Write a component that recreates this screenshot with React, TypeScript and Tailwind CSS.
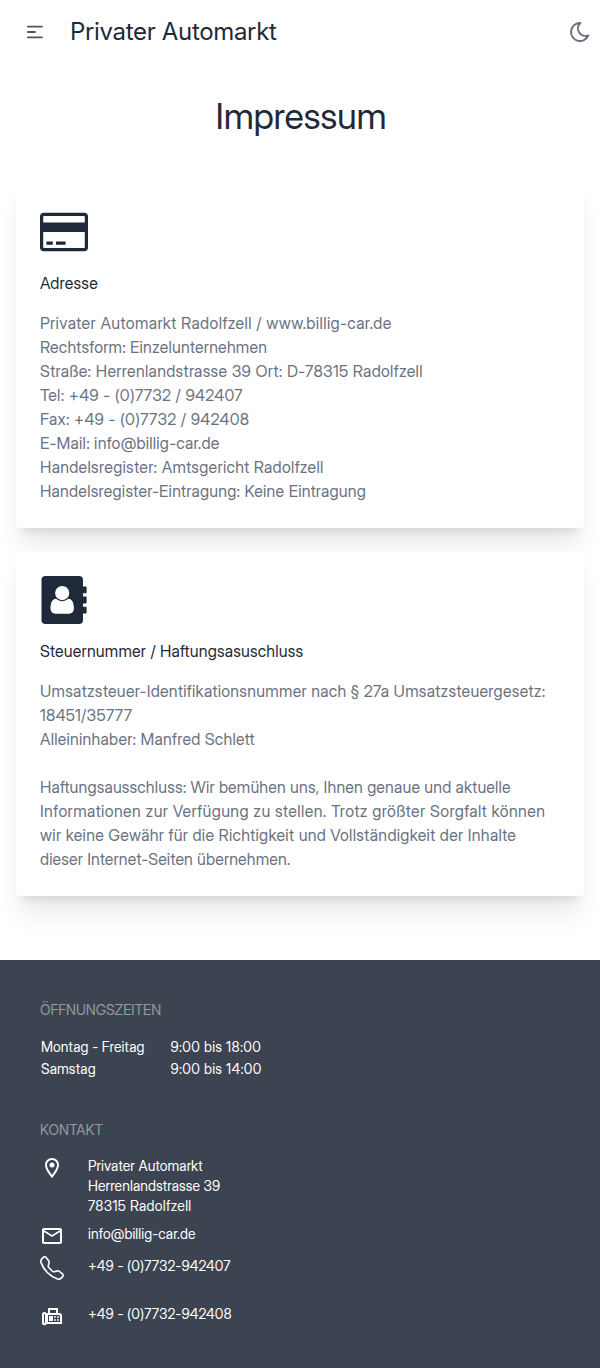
import type { ReactNode } from "react";
import { BsTelephone } from "react-icons/bs";
import { MdOutlineEmail, MdOutlineLocationOn } from "react-icons/md";

function CreditCardIcon() {
  return (
    <svg className="h-12 w-12" viewBox="0 0 48 48" fill="currentColor" aria-hidden="true">
      <path fillRule="evenodd" d="M4 4.8H44a4 4 0 0 1 4 4V39.2a4 4 0 0 1-4 4H4a4 4 0 0 1-4-4V8.8a4 4 0 0 1 4-4ZM4 8a.8.8 0 0 0-.8.8v5.6h41.6V8.8A.8.8 0 0 0 44 8ZM3.2 24v15.2a.8.8 0 0 0 .8.8h40a.8.8 0 0 0 .8-.8V24ZM6.4 33.6h6.4v3.2H6.4ZM16 33.6h9.6v3.2H16Z" />
    </svg>
  );
}

function AddressBookIcon() {
  return (
    <svg className="h-12 w-12" viewBox="0 0 48 48" fill="currentColor" aria-hidden="true">
      <path fillRule="evenodd" d="M5.5 0H39a4 4 0 0 1 4 4v6.4h2.8a.8.8 0 0 1 .8.8v5.2a.8.8 0 0 1-.8.8H43v3.4h2.8a.8.8 0 0 1 .8.8v5.2a.8.8 0 0 1-.8.8H43v3.4h2.8a.8.8 0 0 1 .8.8v5.2a.8.8 0 0 1-.8.8H43V44a4 4 0 0 1-4 4H5.5a4 4 0 0 1-4-4V4a4 4 0 0 1 4-4ZM22.2 10a7.1 7.1 0 1 0 0 14.2 7.1 7.1 0 0 0 0-14.2ZM16.1 22.8c-3.9.2-5.6 4.2-5.6 9.7 0 3.3 1.9 5.2 4.8 5.2h13.8c2.9 0 4.8-1.9 4.8-5.2 0-5.5-1.7-9.5-5.6-9.7-1.9 1.6-3.8 2.4-6.1 2.4s-4.2-.8-6.1-2.4Z" />
    </svg>
  );
}

function FaxIcon() {
  return (
    <svg className="h-6 w-6" viewBox="0 0 24 24" fill="currentColor" aria-hidden="true">
      <path fillRule="evenodd" d="M8 4h10v5h1a3 3 0 0 1 3 3v8H7v-1a2.5 2.5 0 0 1-5-.5v-8A2.5 2.5 0 0 1 4.5 8 2.5 2.5 0 0 1 6.6 9.200H8ZM10 6v3h6V6ZM4.5 10a.5.5 0 0 0-.5.5v8a.5.5 0 0 0 1 0v-8a.5.5 0 0 0-.5-.5ZM8 11v7h12v-6a1 1 0 0 0-1-1Z" />
      <path d="M9 12h4v5H9Z" />
      <path opacity=".65" d="M14 12h2v2h-2ZM17 12h2v2h-2ZM14 15h2v2h-2ZM17 15h2v2h-2Z" />
    </svg>
  );
}

function MoonIcon() {
  return (
    <svg className="h-6 w-6" viewBox="0 0 24 24" fill="none" stroke="currentColor" strokeWidth="2" strokeLinecap="round" strokeLinejoin="round" aria-hidden="true">
      <path d="M12 3h.393a7.5 7.5 0 0 0 7.92 12.446A9 9 0 1 1 12 3Z" />
    </svg>
  );
}

function Card({ icon, title, children }: { icon: ReactNode; title: string; children: ReactNode }) {
  return (
    <section className="rounded bg-white p-6 shadow-xl">
      {icon}
      <h2 className="mt-[15px] mb-4 text-base leading-6 tracking-[0.2px] text-gray-800">{title}</h2>
      <div className="mb-px text-base leading-6 tracking-[0.235px] text-gray-500">{children}</div>
    </section>
  );
}

function Contact({ icon, children, className }: { icon: ReactNode; children: ReactNode; className: string }) {
  return (
    <li className={"flex gap-6 " + className}>
      <span className="h-6 w-6 shrink-0">{icon}</span>
      <span>{children}</span>
    </li>
  );
}

export default function App() {
  return (
    <div className="min-h-[1368px] bg-white font-['Inter_Display','Inter',sans-serif] text-gray-800">
      <header className="flex h-16 items-center pr-2 pl-[23px]">
        <button aria-label="Menü" className="text-gray-600">
          <svg className="h-6 w-6" viewBox="0 0 24 24" fill="none" stroke="currentColor" strokeWidth="1.8">
            <path d="M4.2 6.7h15.5M4.2 12h8.5M4.2 17.3h15.5" />
          </svg>
        </button>
        <div className="ml-[23px] font-['Inter',sans-serif] text-2xl tracking-[-0.33px]">Privater Automarkt</div>
        <button aria-label="Dunkelmodus" className="ml-auto text-gray-500"><MoonIcon /></button>
      </header>
      <main className="px-4 pb-16">
        <h1 className="pt-8 pl-0.5 text-center text-4xl leading-10 tracking-[-0.3px]">Impressum</h1>
        <div className="mt-12 flex flex-col gap-6">
          <Card icon={<CreditCardIcon />} title="Adresse">
            <p className="tracking-[0.4px]">Privater Automarkt Radolfzell / www.billig-car.de</p>
            <p className="tracking-[0.215px]">Rechtsform: Einzelunternehmen</p>
            <p className="tracking-[0.305px]">Straße: Herrenlandstrasse 39 Ort: D-78315 Radolfzell</p>
            <p className="tracking-[0.3px]">Tel: +49 - (0)7732 / 942407</p>
            <p className="tracking-[0.3px]">Fax: +49 - (0)7732 / 942408</p>
            <p>E-Mail: info@billig-car.de</p>
            <p className="tracking-[0.3px]">Handelsregister: Amtsgericht Radolfzell</p>
            <p>Handelsregister-Eintragung: Keine Eintragung</p>
          </Card>
          <Card icon={<AddressBookIcon />} title="Steuernummer / Haftungsasuschluss">
            <p className="tracking-[0.28px]">Umsatzsteuer-Identifikationsnummer nach § 27a Umsatzsteuergesetz: 18451/35777</p>
            <p>Alleininhaber: Manfred Schlett</p>
            <p className="mt-6">
              <span className="block whitespace-nowrap tracking-[0.17px]">Haftungsausschluss: Wir bemühen uns, Ihnen genaue und aktuelle </span>
              <span className="block whitespace-nowrap tracking-[0.4px]">Informationen zur Verfügung zu stellen. Trotz größter Sorgfalt können </span>
              <span className="block whitespace-nowrap tracking-[0.29px]">wir keine Gewähr für die Richtigkeit und Vollständigkeit der Inhalte </span>
              <span className="block whitespace-nowrap tracking-[0.13px]">dieser Internet-Seiten übernehmen.</span>
            </p>
          </Card>
        </div>
      </main>
      <footer className="h-[408px] bg-[#3d4451] px-10 pt-10 text-sm leading-5 tracking-[0.08px] text-white">
        <h3 className="uppercase tracking-normal text-[#9599a0]">Öffnungszeiten</h3>
        <table className="mt-4 border-separate border-spacing-0">
          <tbody>
            <tr><td className="w-[129.5px] p-px">Montag - Freitag</td><td className="p-px tracking-[0.3px]">9:00 bis 18:00</td></tr>
            <tr><td className="p-px">Samstag</td><td className="p-px tracking-[0.3px]">9:00 bis 14:00</td></tr>
          </tbody>
        </table>
        <h3 className="mt-10 uppercase text-[#9599a0]">Kontakt</h3>
        <ul className="mt-4">
          <Contact className="h-[68px]" icon={<MdOutlineLocationOn className="h-6 w-6" />}>
            Privater Automarkt<br />Herrenlandstrasse 39<br /><span className="tracking-[0.3px]">78315 Radolfzell</span>
          </Contact>
          <Contact className="h-8" icon={<MdOutlineEmail className="h-6 w-6" />}>info@billig-car.de</Contact>
          <Contact className="h-12" icon={<BsTelephone className="h-6 w-6" />}>+49 - (0)7732-942407</Contact>
          <Contact className="h-6" icon={<FaxIcon />}>+49 - (0)7732-942408</Contact>
        </ul>
      </footer>
    </div>
  );
}
